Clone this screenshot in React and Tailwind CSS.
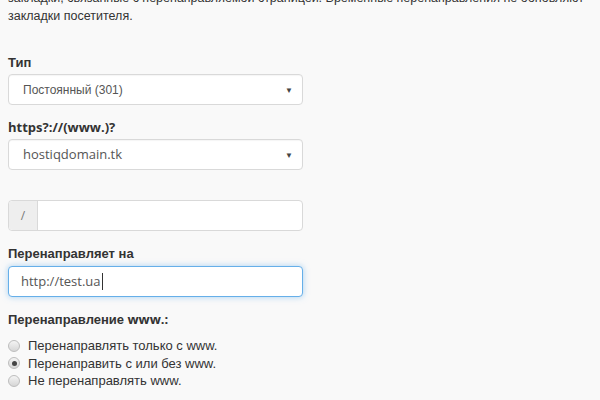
import { useState } from 'react';

const sans = "font-['Liberation_Sans',Arial,sans-serif]";
const open = "font-['Open_Sans',sans-serif]";

// the page's Open Sans has no Cyrillic, so Cyrillic falls back to Arial
const Label = ({ children }) => (
  <div className={`${open} flex h-[18px] items-center whitespace-pre text-[13px] font-bold text-[#333]`}>{children}</div>
);

const Cyr = ({ children }) => <span className={sans}>{children}</span>;

const FakeSelect = ({ value, textClass }) => (
  <div className="flex h-[31px] w-[295px] items-center justify-between rounded-[4px] border border-[#d9d9d9] bg-white pl-[14px] pr-[9px] shadow-[inset_0_1px_1px_rgba(0,0,0,0.04)]">
    <span className={textClass}>{value}</span>
    <span className="text-[8px] leading-none text-[#444]">▼</span>
  </div>
);

const Radio = ({ checked, label }) => (
  <label className="flex h-[17.5px] items-center gap-[8px]">
    <span className="flex h-[12px] w-[12px] items-center justify-center rounded-full border border-[#bdbdbd] bg-gradient-to-b from-[#f4f4f4] to-[#d6d6d6]">
      {checked && <span className="h-[5px] w-[5px] rounded-full bg-[#444]" />}
    </span>
    <span className={`${sans} text-[13px] text-[#333]`}>{label}</span>
  </label>
);

export default function App() {
  const [choice] = useState(1);
  return (
    <div className="h-[400px] w-[600px] overflow-hidden bg-[#f9f9f9]">
      <div className="px-[8px]">
        <p className={`${sans} mt-[-11px] w-[592px] text-[12.5px] leading-[18px] text-[#333]`}>
          закладки, связанные с перенаправляемой страницей. Временные перенаправления не обновляют
          закладки посетителя.
        </p>

        <div className="mt-[29px]">
          <Label><Cyr>Тип</Cyr></Label>
          <div className="mt-[2px]">
            <FakeSelect value="Постоянный (301)" textClass={`${sans} text-[12px] text-[#555]`} />
          </div>
        </div>

        <div className="mt-[14px]">
          <Label>https?://(www.)?</Label>
          <div className="mt-[2px]">
            <FakeSelect value="hostiqdomain.tk" textClass={`${open} text-[13px] text-[#555]`} />
          </div>
        </div>

        <div className="mt-[30px] flex h-[31px] w-[295px] rounded-[4px] border border-[#d9d9d9] bg-white">
          <span className={`${open} flex w-[29px] items-center justify-center rounded-l-[4px] border-r border-[#d9d9d9] bg-[#eee] text-[12px] text-[#777]`}>
            /
          </span>
          <input className="min-w-0 flex-1 bg-transparent outline-none" />
        </div>

        <div className="mt-[14px]">
          <Label><Cyr>Перенаправляет на</Cyr></Label>
          <div className="mt-[3px] flex h-[31px] w-[295px] items-center rounded-[4px] border border-[#66afe9] bg-white px-[12px] shadow-[0_0_6px_rgba(102,175,233,0.55)]">
            <span className={`${open} text-[13px] text-[#555]`}>http://test.ua</span>
            <span className="ml-[1px] h-[17px] w-[1px] bg-[#333]" />
          </div>
        </div>

        <div className="mt-[14px]">
          <Label><Cyr>Перенаправление</Cyr> www.:</Label>
          <div className="mt-[8px] flex flex-col">
            <Radio checked={choice === 0} label="Перенаправлять только с www." />
            <Radio checked={choice === 1} label="Перенаправить с или без www." />
            <Radio checked={choice === 2} label="Не перенаправлять www." />
          </div>
        </div>
      </div>
    </div>
  );
}
